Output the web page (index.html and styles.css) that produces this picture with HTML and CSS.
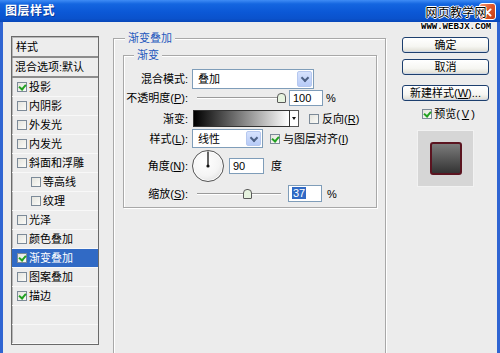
FILE: index.html
```html
<!DOCTYPE html>
<html lang="zh-CN">
<head>
    <meta charset="UTF-8">
    <title>图层样式</title>
    <link rel="stylesheet" href="styles.css">
</head>
<body>
    <div class="window">
        <div class="titlebar">
            <span class="title">图层样式</span>
            <div class="close-btn">
                <svg width="17" height="17" viewBox="0 0 17 17">
                    <path d="M5 5 L12 12 M12 5 L5 12" stroke="#fff" stroke-width="2.2" stroke-linecap="round"/>
                </svg>
            </div>
        </div>

        <!-- site watermark over the title bar -->
        <div class="watermark">
            <div class="wm-cn">网页教学网</div>
            <div class="wm-en">WWW.WEBJX.COM</div>
        </div>

        <div class="main">
            <div class="style-list">
                <div class="list-head">样式</div>
                <div class="list-blend">混合选项:默认</div>
                <div class="list-item"><span class="cb on"></span>投影</div>
                <div class="list-item"><span class="cb"></span>内阴影</div>
                <div class="list-item"><span class="cb"></span>外发光</div>
                <div class="list-item"><span class="cb"></span>内发光</div>
                <div class="list-item"><span class="cb"></span>斜面和浮雕</div>
                <div class="list-item sub"><span class="cb"></span>等高线</div>
                <div class="list-item sub"><span class="cb"></span>纹理</div>
                <div class="list-item"><span class="cb"></span>光泽</div>
                <div class="list-item"><span class="cb"></span>颜色叠加</div>
                <div class="list-item active"><span class="cb on"></span>渐变叠加</div>
                <div class="list-item"><span class="cb"></span>图案叠加</div>
                <div class="list-item"><span class="cb on"></span>描边</div>
                <div class="list-item"></div>
                <div class="list-item"></div>
            </div>

            <fieldset class="group outer">
                <legend>渐变叠加</legend>
                <fieldset class="group inner">
                    <legend>渐变</legend>

                    <div class="row row-blend">
                        <span class="lbl">混合模式:</span>
                        <div class="select select-mode">
                            <span class="select-text">叠加</span>
                            <span class="drop"></span>
                        </div>
                    </div>

                    <div class="row row-opacity">
                        <span class="lbl">不透明度(<u>P</u>):</span>
                        <div class="slider">
                            <span class="track"></span>
                            <span class="thumb thumb-opacity"></span>
                        </div>
                        <div class="field field-pct">100</div>
                        <span class="unit">%</span>
                    </div>

                    <div class="row row-gradient">
                        <span class="lbl">渐变:</span>
                        <div class="grad-box"></div>
                        <div class="grad-arrow"></div>
                        <span class="cb"></span>
                        <span class="check-text">反向(<u>R</u>)</span>
                    </div>

                    <div class="row row-style">
                        <span class="lbl">样式(<u>L</u>):</span>
                        <div class="select select-style">
                            <span class="select-text">线性</span>
                            <span class="drop"></span>
                        </div>
                        <span class="cb on"></span>
                        <span class="check-text">与图层对齐(<u>I</u>)</span>
                    </div>

                    <div class="row row-angle">
                        <span class="lbl">角度(<u>N</u>):</span>
                        <div class="dial">
                            <svg width="32" height="32" viewBox="0 0 32 32">
                                <line x1="16" y1="16" x2="16" y2="1.5" stroke="#111" stroke-width="1.3"/>
                                <circle cx="16" cy="16" r="1.6" fill="#111"/>
                            </svg>
                        </div>
                        <div class="field field-angle">90</div>
                        <span class="unit unit-deg">度</span>
                    </div>

                    <div class="row row-scale">
                        <span class="lbl">缩放(<u>S</u>):</span>
                        <div class="slider">
                            <span class="track"></span>
                            <span class="thumb thumb-scale"></span>
                        </div>
                        <div class="field field-scale"><span class="sel">37</span></div>
                        <span class="unit unit-scale">%</span>
                    </div>
                </fieldset>
            </fieldset>

            <div class="actions">
                <button class="btn">确定</button>
                <button class="btn btn-cancel">取消</button>
                <button class="btn btn-new">新建样式(<u>W</u>)...</button>
                <div class="preview-check"><span class="cb on"></span>预览(<u>V</u>)</div>
                <div class="preview-box">
                    <div class="preview-swatch"></div>
                </div>
            </div>
        </div>
    </div>
</body>
</html>
```

FILE: styles.css
```css
* {
    margin: 0;
    padding: 0;
    box-sizing: border-box;
}

body {
    width: 500px;
    height: 353px;
    overflow: hidden;
    background: #ececec;
    color: #000;
    font-family: "Liberation Sans", "Noto Sans CJK SC", sans-serif;
    font-size: 11px;
    line-height: 14px;
}

u {
    text-decoration: underline;
    text-underline-offset: 1px;
}

.window {
    position: relative;
    height: 100%;
    display: flex;
    flex-direction: column;
}

/* ---- title bar ---- */
.titlebar {
    height: 22px;
    flex: none;
    display: flex;
    align-items: center;
    justify-content: space-between;
    padding: 0 4px 0 5px;
    background: linear-gradient(#3f8cf5 0%, #1466e0 18%, #0b58d6 55%, #0a52cc 85%, #0846b8 100%);
}

.title {
    color: #fff;
    font-size: 12px;
    font-weight: bold;
    letter-spacing: 0.5px;
    text-shadow: 1px 1px 0 #0a3a9a;
}

.close-btn {
    width: 17px;
    height: 17px;
    border: 1px solid #fff;
    border-radius: 3px;
    background: linear-gradient(135deg, #f09a78 0%, #e0582c 45%, #c33d14 100%);
    display: flex;
}

.watermark {
    position: absolute;
    top: 7px;
    left: 421px;
    text-align: center;
    color: #000;
}

.wm-cn {
    font-size: 12px;
    line-height: 13px;
    letter-spacing: 0.2px;
    text-shadow: 1px 0 0 #fff, -1px 0 0 #fff, 0 1px 0 #fff, 0 -1px 0 #fff;
}

.wm-en {
    margin-top: 3px;
    font-family: "Liberation Mono", monospace;
    font-size: 9px;
    line-height: 9px;
    font-weight: bold;
    text-shadow: 1px 0 0 #fff, -1px 0 0 #fff, 0 1px 0 #fff, 0 -1px 0 #fff;
}

/* ---- body ---- */
.main {
    flex: 1;
    display: flex;
    align-items: flex-start;
    padding: 9px 0 0 8px;
    border-left: 3px solid #2f64d2;
    border-right: 3px solid #2f64d2;
}

/* ---- style list ---- */
.style-list {
    width: 88px;
    margin-top: 5px;
    border: 1px solid #6a6a6a;
    box-shadow: inset 1px 1px 0 #b8b8b8;
    background: #ededed;
}

.list-head {
    height: 21px;
    padding: 3px 0 0 4px;
    border-bottom: 2px solid #8c8c8c;
}

.list-blend {
    height: 20px;
    padding: 2px 0 0 3px;
    border-bottom: 2px solid #8c8c8c;
}

.list-item {
    height: 19px;
    display: flex;
    align-items: center;
    padding-left: 5px;
    border-bottom: 1px solid #f8f8f8;
}

.list-item.sub {
    padding-left: 19px;
}

.list-item.active {
    background: #316ac5;
    color: #fff;
}

.list-item .cb {
    margin-right: 2px;
}

/* checkbox */
.cb {
    width: 10px;
    height: 10px;
    flex: none;
    display: inline-block;
    border: 1px solid #7c8a98;
    background: linear-gradient(135deg, #e4e4de, #fbfbf8);
    position: relative;
}

.cb.on::after {
    content: "";
    position: absolute;
    left: 2px;
    top: 0px;
    width: 3px;
    height: 5px;
    border-right: 2px solid #21a121;
    border-bottom: 2px solid #21a121;
    transform: rotate(40deg);
}

/* ---- fieldsets ---- */
.group {
    border: 1px solid #a8a8a8;
    box-shadow: inset 1px 1px 0 #fff, 1px 1px 0 #fff;
}

.group legend {
    color: #2458bd;
    background: #ececec;
    padding: 0 3px;
    line-height: 14px;
}

.outer {
    width: 273px;
    height: 340px;
    margin-left: 14px;
    padding: 3px 8px 0 9px;
}

.outer > legend {
    margin-left: 2px;
}

.inner {
    width: 254px;
    padding: 7px 0 5px 0;
}

.inner > legend {
    margin-left: 10px;
}

.row {
    display: flex;
    align-items: center;
}

.lbl {
    width: 64px;
    flex: none;
    text-align: right;
    margin-right: 4px;
    white-space: nowrap;
}

.row-blend {
    height: 20px;
}

.row-opacity {
    height: 16px;
    margin-top: 1px;
}

.row-gradient {
    height: 17px;
    margin-top: 4px;
}

.row-style {
    height: 19px;
    margin-top: 2px;
}

.row-angle {
    height: 32px;
    margin-top: 2px;
}

.row-scale {
    height: 17px;
    margin-top: 3px;
}

/* select boxes */
.select {
    height: 100%;
    display: flex;
    align-items: center;
    justify-content: space-between;
    border: 1px solid #7f9db9;
    background: #fff;
    padding: 1px;
}

.select-mode {
    width: 122px;
}

.select-style {
    width: 71px;
}

.select-text {
    padding-left: 4px;
}

.drop {
    width: 15px;
    height: 100%;
    border: 1px solid #b6c8ef;
    border-radius: 2px;
    background: linear-gradient(#d6e2fd, #b7cbf7);
    position: relative;
}

.drop::after {
    content: "";
    position: absolute;
    left: 4px;
    top: 3px;
    width: 4px;
    height: 4px;
    border-right: 2px solid #4d6185;
    border-bottom: 2px solid #4d6185;
    transform: rotate(45deg);
}

/* slider */
.slider {
    width: 88px;
    height: 100%;
    margin-left: 5px;
    position: relative;
    display: flex;
    align-items: center;
}

.track {
    width: 84px;
    height: 2px;
    border-top: 1px solid #9a9a9a;
    border-bottom: 1px solid #fff;
}

.thumb {
    position: absolute;
    top: 50%;
    width: 9px;
    height: 10px;
    margin-top: -5px;
    background: #e6f3df;
    border: 1px solid #5a5a5a;
    border-radius: 4px 4px 1px 1px;
}

.thumb-opacity {
    left: 80px;
}

.thumb-scale {
    left: 46px;
}

/* text fields */
.field {
    height: 16px;
    border: 1px solid #7f9db9;
    background: #fff;
    padding-left: 3px;
    line-height: 14px;
}

.field-pct {
    width: 34px;
    margin-left: 4px;
}

.field-angle {
    width: 35px;
    margin-left: 5px;
}

.field-scale {
    width: 34px;
    margin-left: 3px;
    height: 17px;
}

.sel {
    background: #316ac5;
    color: #fff;
    padding: 0 1px;
}

.unit {
    margin-left: 3px;
}

.unit-deg {
    margin-left: 7px;
}

.unit-scale {
    margin-left: 5px;
}

/* gradient swatch */
.grad-box {
    width: 97px;
    height: 17px;
    margin-left: 1px;
    border: 1px solid #333;
    background: linear-gradient(to right, #000, #fff);
}

.grad-arrow {
    width: 9px;
    height: 17px;
    border: 1px solid #555;
    border-left: none;
    background: #fff;
    position: relative;
}

.grad-arrow::after {
    content: "";
    position: absolute;
    left: 2px;
    top: 6px;
    border-left: 2px solid transparent;
    border-right: 2px solid transparent;
    border-top: 3px solid #111;
}

.row-gradient .cb {
    margin-left: 10px;
}

.row-style .cb {
    margin-left: 7px;
}

.check-text {
    margin-left: 3px;
}

/* angle dial */
.dial {
    width: 32px;
    height: 32px;
    border-radius: 50%;
    border: 1px solid #555;
    background: radial-gradient(circle at 40% 35%, #fff 0%, #f4f4f4 55%, #d4d4d4 100%);
    box-shadow: inset 0 0 0 1px #fff;
    position: relative;
}

.dial svg {
    position: absolute;
    left: -1px;
    top: -1px;
}

/* ---- right column ---- */
.actions {
    width: 87px;
    margin-left: 16px;
    margin-top: 6px;
    display: flex;
    flex-direction: column;
    align-items: center;
}

.btn {
    width: 87px;
    height: 16px;
    border: 1px solid #1d3f6e;
    border-radius: 3px;
    background: linear-gradient(#ffffff 0%, #f6f6f2 60%, #dedcd2 100%);
    box-shadow: inset 0 -1px 0 #cfd8e6;
    font-family: inherit;
    font-size: 11px;
    line-height: 14px;
    color: #000;
}

.btn-cancel {
    margin-top: 6px;
}

.btn-new {
    margin-top: 10px;
}

.preview-check {
    margin-top: 6px;
    display: flex;
    align-items: center;
    gap: 2px;
    margin-left: 6px;
}

.preview-box {
    width: 57px;
    height: 57px;
    margin-top: 9px;
    background: #d6d6d6;
    border: 1px solid #f2f2f2;
    display: flex;
    align-items: center;
    justify-content: center;
}

.preview-swatch {
    width: 32px;
    height: 33px;
    border: 2px solid #5b1420;
    border-radius: 3px;
    background: linear-gradient(#7c7c7c, #333);
}
```
